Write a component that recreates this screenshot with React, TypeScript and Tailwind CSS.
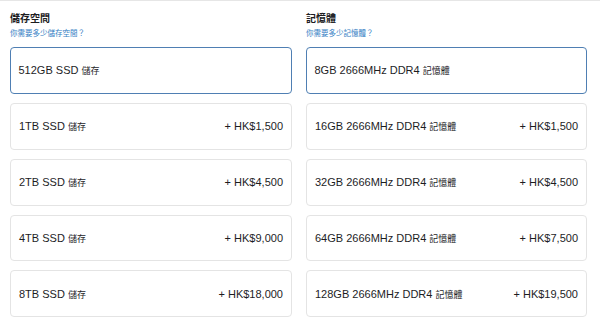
const storage = [
  { label: '512GB SSD', suffix: '儲存', price: '' },
  { label: '1TB SSD', suffix: '儲存', price: '+ HK$1,500' },
  { label: '2TB SSD', suffix: '儲存', price: '+ HK$4,500' },
  { label: '4TB SSD', suffix: '儲存', price: '+ HK$9,000' },
  { label: '8TB SSD', suffix: '儲存', price: '+ HK$18,000' },
]

const memory = [
  { label: '8GB 2666MHz DDR4', suffix: '記憶體', price: '' },
  { label: '16GB 2666MHz DDR4', suffix: '記憶體', price: '+ HK$1,500' },
  { label: '32GB 2666MHz DDR4', suffix: '記憶體', price: '+ HK$4,500' },
  { label: '64GB 2666MHz DDR4', suffix: '記憶體', price: '+ HK$7,500' },
  { label: '128GB 2666MHz DDR4', suffix: '記憶體', price: '+ HK$19,500' },
]

interface Option {
  label: string
  suffix: string
  price: string
}

function OptionGroup({ title, hint, options }: { title: string; hint: string; options: Option[] }) {
  return (
    <div className="flex flex-col">
      <h2 className="text-[10px] leading-[12px] font-bold text-[#1d1d1f] mt-[12px]">{title}</h2>
      <p className="text-[7.5px] leading-[10px] text-[#3580c4] mt-[4px]">{hint}</p>
      <div className="flex flex-col gap-[9px] mt-[8px]">
        {options.map((o, i) => (
          <div
            key={o.label}
            className={
              i === 0
                ? 'h-[47px] rounded-[4px] border-[1.5px] border-[#4f7fb3] px-[7.5px] flex items-center justify-between'
                : 'h-[46.8px] rounded-[4px] border border-[#e4e4e4] px-[8px] flex items-center justify-between'
            }
          >
            <span className="text-[11px] text-[#1d1d1f]">
              {o.label} <span className="text-[9px]">{o.suffix}</span>
            </span>
            {o.price && <span className="text-[11px] text-[#1d1d1f]">{o.price}</span>}
          </div>
        ))}
      </div>
    </div>
  )
}

export default function App() {
  return (
    <div
      className="w-[600px] h-[323px] bg-white border-t border-[#e6e6e6] overflow-hidden"
      style={{ fontFamily: '"Liberation Sans", "Noto Sans CJK TC", sans-serif' }}
    >
      <div className="grid grid-cols-[282px_281px] gap-[14px] pl-[10px]">
        <OptionGroup title="儲存空間" hint="你需要多少儲存空間？" options={storage} />
        <OptionGroup title="記憶體" hint="你需要多少記憶體？" options={memory} />
      </div>
    </div>
  )
}
